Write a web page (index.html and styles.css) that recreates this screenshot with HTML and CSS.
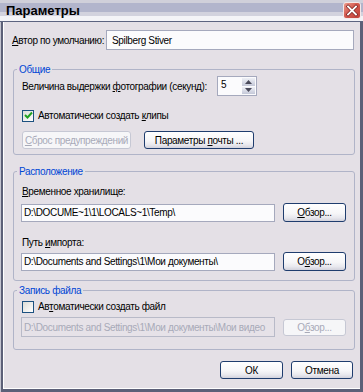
FILE: index.html
```html
<!DOCTYPE html>
<html lang="ru">
<head>
<meta charset="utf-8">
<title>Параметры</title>
<link rel="stylesheet" href="styles.css">
</head>
<body>
<div class="window">
  <div class="titlebar">
    <span class="title">Параметры</span>
    <span class="close">
      <svg width="16" height="15" viewBox="0 0 16 15">
        <path d="M4 3.5 L12 11.5 M12 3.5 L4 11.5" stroke="#7a2020" stroke-width="3.2" stroke-linecap="square"/>
        <path d="M4 3.5 L12 11.5 M12 3.5 L4 11.5" stroke="#ffffff" stroke-width="1.8" stroke-linecap="square"/>
      </svg>
    </span>
  </div>
  <div class="frame">
    <div class="client">
      <div class="author-row">
        <span class="lbl"><u>А</u>втор по умолчанию:</span>
        <div class="input author-input"><span>Spilberg Stiver</span></div>
      </div>

      <fieldset class="group g1">
        <legend>Общие</legend>
        <div class="spin-row">
          <span class="lbl">Величина выдержки <u>ф</u>отографии (секунд):</span>
          <div class="spin">
            <span class="spin-val">5</span>
            <span class="spin-btns">
              <span class="spin-btn"><svg width="7" height="4" viewBox="0 0 7 4"><path d="M0 4 L3.5 0 L7 4Z" fill="#4a4a5a"/></svg></span>
              <span class="spin-btn"><svg width="7" height="4" viewBox="0 0 7 4"><path d="M0 0 L3.5 4 L7 0Z" fill="#4a4a5a"/></svg></span>
            </span>
          </div>
        </div>
        <div class="check-row r1">
          <span class="cb">
            <svg width="9" height="9" viewBox="0 0 9 9"><path d="M1 4 L3.5 6.5 L8 1.5" fill="none" stroke="#21a121" stroke-width="2"/></svg>
          </span>
          <span class="lbl">Автоматически создать <u>к</u>липы</span>
        </div>
        <div class="btn-row">
          <span class="btn disabled w-reset"><span><u>С</u>брос предупреждений</span></span>
          <span class="btn w-mail"><span>Параметры <u>п</u>очты ...</span></span>
        </div>
      </fieldset>

      <fieldset class="group g2">
        <legend>Расположение</legend>
        <div class="lbl field-lbl first"><u>В</u>ременное хранилище:</div>
        <div class="path-row">
          <div class="input path"><span>D:\DOCUME~1\1\LOCALS~1\Temp\</span></div>
          <span class="btn browse"><span><u>О</u>бзор...</span></span>
        </div>
        <div class="lbl field-lbl second">Путь <u>и</u>мпорта:</div>
        <div class="path-row second-path">
          <div class="input path"><span>D:\Documents and Settings\1\Мои документы\</span></div>
          <span class="btn browse"><span>О<u>б</u>зор...</span></span>
        </div>
      </fieldset>

      <fieldset class="group g3">
        <legend>Запись файла</legend>
        <div class="check-row r3">
          <span class="cb empty"></span>
          <span class="lbl">Ав<u>т</u>оматически создать файл</span>
        </div>
        <div class="path-row r3-path">
          <div class="input path disabled tall"><span>D:\Documents and Settings\1\Мои документы\Мои видео</span></div>
          <span class="btn browse disabled short"><span>О<u>б</u>зор...</span></span>
        </div>
      </fieldset>

      <div class="footer">
        <span class="btn ok"><span>ОК</span></span>
        <span class="btn cancel"><span>Отмена</span></span>
      </div>
    </div>
  </div>
</div>
</body>
</html>
```
FILE: styles.css
```css
html, body {
  margin: 0;
  padding: 0;
}
body {
  background: #e4e0e6;
  font-family: "Liberation Sans", Arial, sans-serif;
  font-size: 10px;
  letter-spacing: -0.35px;
  color: #000;
  white-space: nowrap;
}
u {
  text-decoration: underline;
  text-underline-offset: 1px;
}
.window {
  width: 363px;
  height: 392px;
  display: flex;
  flex-direction: column;
  overflow: hidden;
}
.titlebar {
  height: 21px;
  border-bottom: 1px solid #5c6480;
  display: flex;
  align-items: center;
  justify-content: space-between;
  padding: 0 2px 0 6px;
  background: linear-gradient(to bottom, #d0d0da 0, #d0d0da 3px, #b2b5cc 3px, #b2b5cc 12px, #d2d2de 12px, #d2d2de 16px, #f3f3f7 16px);
}
.title {
  font-weight: bold;
  font-size: 13px;
  letter-spacing: 0;
}
.close {
  width: 18px;
  height: 17px;
  box-sizing: border-box;
  border: 1px solid #f4e8e8;
  border-radius: 3px;
  background: linear-gradient(135deg, #ec9a8c 0%, #d45a50 45%, #c04038 100%);
  display: flex;
  align-items: center;
  justify-content: center;
}
.frame {
  flex: 1;
  display: flex;
  padding: 0 3px 3px 3px;
  background: linear-gradient(to right, #c4c4d0 1px, #5c6078 1px);
}
.client {
  flex: 1;
  background: #e4e0e6;
  box-shadow: inset 1px 0 0 #ffffff, inset 0 -1px 0 #ffffff;
  padding-top: 8px;
  display: flex;
  flex-direction: column;
}
.author-row {
  display: grid;
  grid-template-columns: 94px 1fr;
  align-items: center;
  margin: 0 6px 0 9px;
  height: 20px;
}
.input {
  box-sizing: border-box;
  border: 1px solid #a5a9bd;
  background: #fbfbfd;
  padding: 0 2px;
  display: flex;
  align-items: center;
  overflow: hidden;
}
.author-input {
  height: 20px;
  padding-left: 5px;
}
.group {
  margin: 0 5px 0 10px;
  padding: 0 8px 5px 7px;
  border: 1px solid #b0b4c8;
  border-radius: 3px;
  min-width: 0;
}
.group legend {
  padding: 0 2px;
  margin-left: -4px;
  color: #0046d5;
  line-height: 13px;
}
.g1 { margin-top: 13px; padding-bottom: 5px; }
.g2 { margin-top: 10px; padding-bottom: 9px; }
.g3 { margin-top: 3px; padding-bottom: 12px; }

.spin-row {
  display: grid;
  grid-template-columns: 195px 40px;
  align-items: center;
  height: 20px;
  padding-left: 1px;
}
.spin {
  box-sizing: border-box;
  height: 20px;
  border: 1px solid #a5a9bd;
  background: #fbfbfd;
  display: flex;
  justify-content: space-between;
  align-items: stretch;
}
.spin-val {
  padding-left: 3px;
  line-height: 16px;
}
.spin-btns {
  width: 13px;
  display: flex;
  flex-direction: column;
  padding: 1px 1px 1px 0;
  gap: 1px;
}
.spin-btn {
  flex: 1;
  background: linear-gradient(to bottom, #eef0f6, #c4c8d8);
  display: flex;
  align-items: center;
  justify-content: center;
}
.check-row {
  display: flex;
  align-items: center;
  gap: 4px;
  height: 13px;
  padding-left: 1px;
}
.r1 { margin-top: 13px; }
.r3 { margin-top: 3px; }
.cb {
  box-sizing: border-box;
  width: 12px;
  height: 12px;
  border: 1px solid #1c5180;
  background: linear-gradient(135deg, #dcdcd6, #ffffff);
  display: flex;
  align-items: center;
  justify-content: center;
}
.btn-row {
  display: flex;
  gap: 13px;
  margin-top: 9px;
  padding-left: 1px;
}
.btn {
  box-sizing: border-box;
  height: 18px;
  border: 1px solid #1f3d6e;
  border-radius: 3px;
  background: linear-gradient(to bottom, #ffffff 0%, #f6f6f8 55%, #e8e8ee 80%, #d2d2dc 100%);
  display: flex;
  align-items: center;
  justify-content: center;
}
.btn.disabled {
  border-color: #c6c8d4;
  background: #f6f6f8;
  color: #a8aab8;
}
.w-reset { width: 109px; }
.w-mail { width: 110px; }
.field-lbl {
  line-height: 13px;
  padding-left: 1px;
}
.field-lbl.first { margin-top: 7px; }
.field-lbl.second { margin-top: 14px; }
.path-row {
  display: flex;
  align-items: center;
  gap: 8px;
  margin-top: 5px;
}
.path-row.second-path { margin-top: 3px; }
.input.path {
  width: 254px;
  height: 18px;
}
.input.path.tall { height: 20px; }
.input.disabled {
  background: #e6e2e8;
  border-color: #b8bac8;
  color: #a8aab8;
}
.browse {
  width: 63px;
  height: 19px;
}
.browse.short { height: 17px; }
.r3-path { margin-top: 4px; }
.footer {
  display: flex;
  justify-content: flex-end;
  gap: 8px;
  margin: 11px 7px 0 0;
}
.ok { width: 63px; }
.cancel { width: 62px; }
```
